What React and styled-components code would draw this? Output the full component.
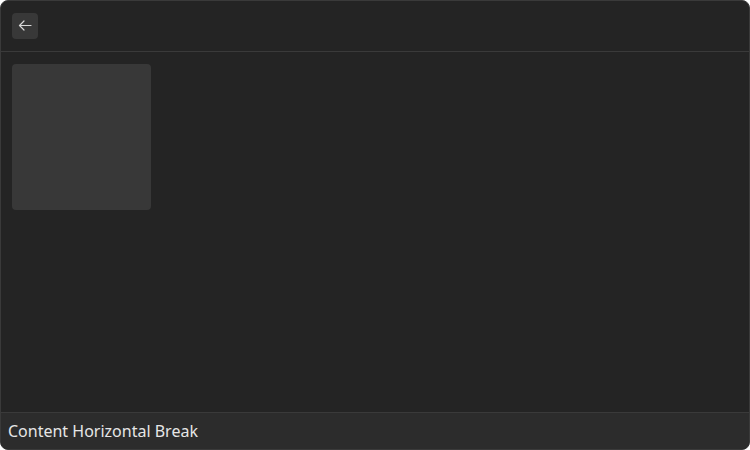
import React from 'react'
import styled, { createGlobalStyle } from 'styled-components'

const Global = createGlobalStyle`
  html, body {
    margin: 0;
    padding: 0;
    background: #ffffff;
  }
  #root {
    width: 750px;
    height: 450px;
  }
  * {
    box-sizing: border-box;
  }
`

const Window = styled.div`
  width: 750px;
  height: 450px;
  display: flex;
  flex-direction: column;
  background: #242424;
  border: 1px solid #3a3a3a;
  border-radius: 8px;
  overflow: hidden;
  font-family: "Noto Sans", "Open Sans", sans-serif;
`

const Header = styled.div`
  height: 51px;
  flex-shrink: 0;
  display: flex;
  align-items: center;
  padding: 0 11px;
  border-bottom: 1px solid #3a3a3a;
`

const IconButton = styled.button`
  width: 26px;
  height: 26px;
  padding: 0;
  border: none;
  border-radius: 4px;
  background: #383838;
  color: #d8d8d8;
  display: flex;
  align-items: center;
  justify-content: center;
  cursor: pointer;
`

const Content = styled.div`
  flex: 1;
  padding: 12px 11px;
`

const Card = styled.div`
  width: 139px;
  height: 146px;
  background: #383838;
  border-radius: 4px;
`

const Footer = styled.div`
  height: 37px;
  flex-shrink: 0;
  display: flex;
  align-items: center;
  padding: 0 7px;
  background: #2c2c2c;
  border-top: 1px solid #3a3a3a;
  color: #e6e6e6;
  font-size: 16px;
`

export default function App() {
  return (
    <>
      <Global />
      <Window>
        <Header>
          <IconButton aria-label="Back">
            <svg width="16" height="16" viewBox="0 0 16 16" fill="none" stroke="currentColor" strokeWidth="1.2" strokeLinecap="round" strokeLinejoin="round">
              <path d="M14 7.5H2.5" />
              <path d="M7 3L2.5 7.5L7 12" />
            </svg>
          </IconButton>
        </Header>
        <Content>
          <Card />
        </Content>
        <Footer>Content Horizontal Break</Footer>
      </Window>
    </>
  )
}
